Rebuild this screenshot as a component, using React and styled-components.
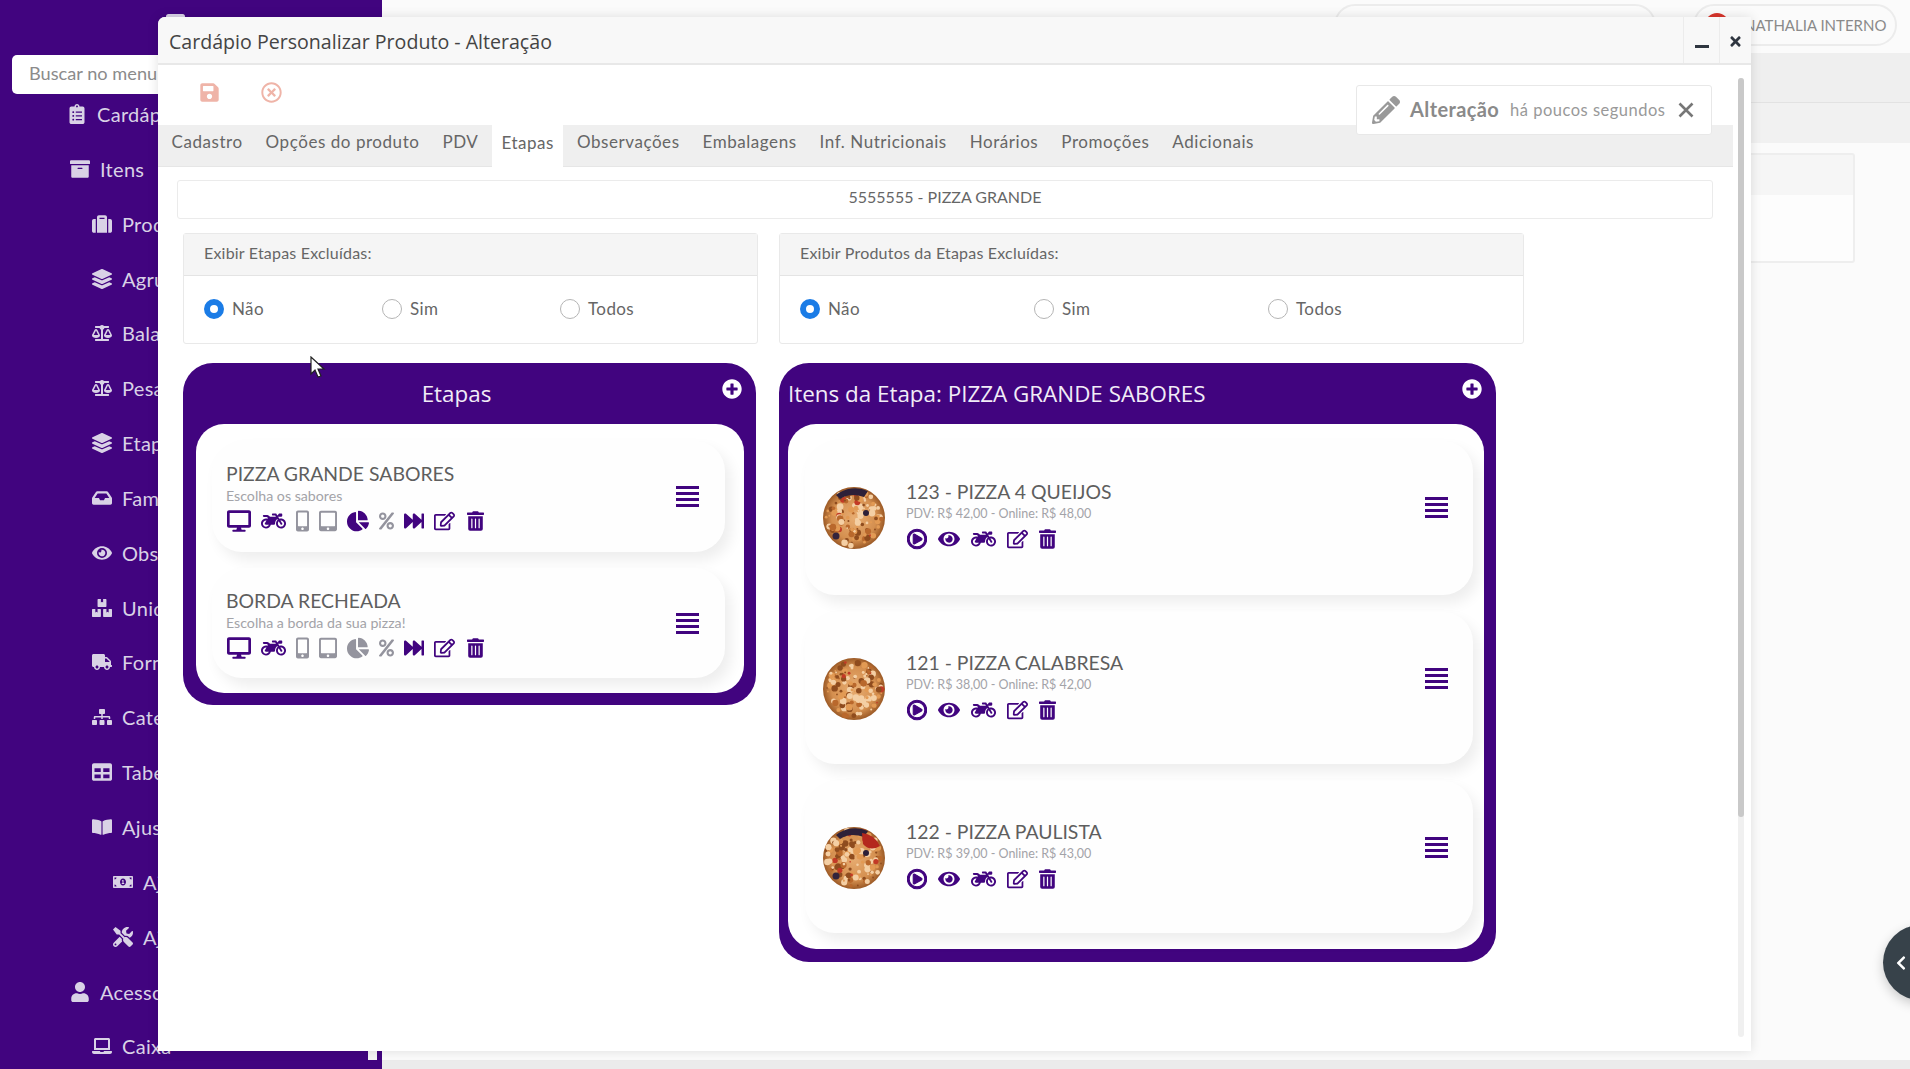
import styled, { createGlobalStyle } from "styled-components";
import {
  FaArchive, FaBalanceScale, FaBookOpen, FaBoxes, FaChartPie, FaChevronLeft, FaClipboardList,
  FaDesktop, FaEye, FaFastForward, FaInbox, FaLaptop, FaLayerGroup, FaMobileAlt, FaMoneyBillAlt, FaMotorcycle,
  FaPencilAlt, FaPercent, FaPlusCircle, FaRegEdit, FaRegPlayCircle, FaRegTimesCircle, FaSave, FaSitemap,
  FaSuitcase, FaTable, FaTabletAlt, FaTimes, FaTools, FaTrashAlt, FaTruck, FaUser,
} from "react-icons/fa";

const PURPLE = "#41047f";
const GOTHIC = `"Lato", "Liberation Sans", sans-serif`;
const HUMAN = `"Open Sans", "Noto Sans", sans-serif`;

const GlobalStyle = createGlobalStyle`
  html, body { margin: 0; padding: 0; background: #fbfbfb; }
  * { box-sizing: border-box; }
`;

const Page = styled.div`
  position: relative;
  display: flex;
  width: 1910px;
  height: 1069px;
  overflow: hidden;
  font-family: ${GOTHIC};
  background: #fbfbfb;
`;

/* sidebar, mostly hidden behind the window */
const Sidebar = styled.aside`
  flex: 0 0 382px;
  padding: 55px 0 0 12px;
  background: ${PURPLE};
`;

const LogoPeek = styled.div`
  position: absolute;
  left: 166px;
  top: 14px;
  width: 19px;
  height: 5px;
  background: #d9d2e6;
  border-radius: 3px;
`;

const SideTick = styled.div`
  position: absolute;
  left: 368px;
  top: 1051px;
  width: 9px;
  height: 9px;
  background: #f4f4f4;
`;

const Search = styled.div`
  width: 200px;
  height: 39px;
  padding: 0 0 3px 17px;
  display: flex;
  align-items: center;
  background: #fff;
  border-radius: 5px;
  font-size: 18.2px;
  color: #8b8b8b;
  white-space: nowrap;
`;

const Menu = styled.nav`
  display: flex;
  flex-direction: column;
  gap: 14.85px;
  margin-top: 0;
`;

const MenuItem = styled.div`
  height: 40px;
  display: flex;
  align-items: center;
  gap: 10px;
  padding-left: ${(p) => p.$indent}px;
  font-size: 20px;
  letter-spacing: 0.3px;
  color: #d9d2e6;
  white-space: nowrap;
  svg { width: 20px; height: 20px; }
`;

const Main = styled.main`
  flex: 1;
  display: flex;
  flex-direction: column;
`;

const TopBar = styled.div`
  height: 53px;
  padding: 4px 13px 0 0;
  display: flex;
  justify-content: flex-end;
  gap: 37px;
`;

const Pill = styled.div`
  width: ${(p) => p.$w}px;
  height: 42px;
  display: flex;
  align-items: center;
  gap: 15px;
  padding: 0 0 0 10px;
  border: 2px solid #ececec;
  border-radius: 22px;
  font-size: 15px;
  color: #8a8a8a;
  white-space: nowrap;
`;

const UserDot = styled.span`
  width: 24px;
  height: 24px;
  border-radius: 50%;
  background: #d8352c;
`;

const GreyBand = styled.div`
  height: 90px;
  background: linear-gradient(#efefef 0 55%, #e2e2e2 55% 56%, #f1f1f1 56%);
`;

const BackBox = styled.div`
  width: 400px;
  height: 110px;
  margin: 10px 0 0 1073px;
  border: 2px solid #eee;
  border-radius: 3px;
  background: linear-gradient(#f6f6f6 0 38%, #fdfdfd 38%);
`;

const BottomStrip = styled.div`
  position: absolute;
  left: 382px;
  right: 0;
  bottom: 0;
  height: 9px;
  background: #ebebeb;
`;

const SideTab = styled.div`
  position: absolute;
  left: 1883px;
  top: 925px;
  width: 75px;
  height: 75px;
  padding-left: 10px;
  display: flex;
  align-items: center;
  border-radius: 50%;
  background: #37424a;
  color: #fff;
  box-shadow: 0 4px 12px rgba(0, 0, 0, 0.2);
  svg { width: 16px; height: 16px; }
`;

/* floating window */
const Window = styled.section`
  position: absolute;
  left: 158px;
  top: 17px;
  width: 1593px;
  height: 1034px;
  background: #fff;
  border-radius: 7px 0 0 0;
  box-shadow: 0 0 12px rgba(0, 0, 0, 0.12);
`;

const TitleBar = styled.header`
  height: 48px;
  display: flex;
  align-items: center;
  padding-left: 11px;
  background: #f8f8f8;
  border-radius: 7px 0 0 0;
  border-bottom: 2px solid #e8e8e8;
`;

const Title = styled.h1`
  flex: 1;
  margin: 2px 0 0;
  font-family: ${HUMAN};
  font-size: 19.6px;
  font-weight: 400;
  color: #444;
`;

const WinButton = styled.button`
  width: ${(p) => p.$w}px;
  height: 46px;
  display: flex;
  align-items: ${(p) => (p.$low ? "flex-end" : "center")};
  justify-content: center;
  padding: ${(p) => (p.$low ? "0 0 15px" : "3px 0 0")};
  border: 0;
  border-left: 1px solid #ececec;
  background: transparent;
  color: #2f3640;
  svg { width: 15px; height: 15px; }
`;

const MinusBar = styled.span`
  width: 14px;
  height: 3px;
  background: #2f3640;
`;

const Toolbar = styled.div`
  height: 60px;
  display: flex;
  align-items: center;
  gap: 41px;
  padding: 0 0 5px 41px;
  color: #efb4a8;
  svg { width: 21px; height: 21px; }
`;

const Tabs = styled.div`
  height: 42px;
  margin-right: 18px;
  padding-left: 2px;
  display: flex;
  background: #efefef;
  border-bottom: 1px solid #e6e6e6;
`;

const Tab = styled.div`
  display: flex;
  align-items: center;
  padding: 0 ${(p) => (p.$active ? "9px" : "11.5px")} 9px;
  margin: 0 ${(p) => (p.$active ? "2.5px" : "0")};
  font-size: 17px;
  letter-spacing: 0.55px;
  color: #666;
  background: ${(p) => (p.$active ? "#fff" : "transparent")};
  height: ${(p) => (p.$active ? "43px" : "auto")};
`;

const ProductBar = styled.div`
  width: 1536px;
  height: 39px;
  margin: 13px 0 0 19px;
  padding-bottom: 6px;
  display: flex;
  align-items: center;
  justify-content: center;
  border: 1px solid #ebebeb;
  border-radius: 3px;
  font-size: 16px;
  color: #666;
`;

const FilterRow = styled.div`
  display: flex;
  gap: 21px;
  margin: 14px 0 0 25px;
`;

const FilterCard = styled.div`
  width: ${(p) => p.$w}px;
  height: 111px;
  border: 1px solid #e9e9e9;
  border-radius: 3px;
`;

const FilterHead = styled.div`
  height: 42px;
  padding: 0 0 5px 20px;
  display: flex;
  align-items: center;
  background: #f5f5f5;
  border-bottom: 1px solid #e4e4e4;
  font-size: 16px;
  letter-spacing: 0.2px;
  color: #666;
`;

const RadioRow = styled.div`
  height: 68px;
  padding: 0 0 3px 20px;
  display: flex;
  align-items: center;
`;

const RadioLabel = styled.label`
  width: ${(p) => p.$w}px;
  display: flex;
  align-items: center;
  gap: 8px;
  font-size: 17px;
  letter-spacing: 0.4px;
  color: #666;
`;

const RadioDot = styled.span`
  width: 20px;
  height: 20px;
  border-radius: 50%;
  background: #fff;
  border: ${(p) => (p.$on ? "6px solid #1b7ce6" : "1.5px solid #b5b5b5")};
`;

const Boards = styled.div`
  display: flex;
  align-items: flex-start;
  gap: 23px;
  margin: 19px 0 0 25px;
`;

const Board = styled.div`
  position: relative;
  width: ${(p) => p.$w}px;
  padding: 0 12px ${(p) => p.$bottom}px ${(p) => p.$left}px;
  background: ${PURPLE};
  border-radius: 30px;
`;

const BoardHead = styled.div`
  height: 61px;
  padding: 0 ${(p) => (p.$center ? "27px" : "0")} 1px 0;
  display: flex;
  align-items: center;
  justify-content: ${(p) => (p.$center ? "center" : "flex-start")};
  font-family: ${HUMAN};
  font-size: 22.4px;
  font-weight: 500;
  color: #f1ecf7;
  white-space: nowrap;
`;

const AddButton = styled.span`
  position: absolute;
  right: 14px;
  top: 16px;
  display: flex;
  color: #fff;
  svg { width: 20px; height: 20px; }
`;

const BoardBody = styled.div`
  display: flex;
  flex-direction: column;
  gap: ${(p) => p.$gap}px;
  padding: 17px ${(p) => p.$right}px ${(p) => p.$bottom}px ${(p) => p.$left}px;
  background: #fff;
  border-radius: 28px;
`;

const StepCard = styled.article`
  height: ${(p) => p.$h}px;
  display: flex;
  align-items: center;
  justify-content: space-between;
  padding: 0 26px 0 14px;
  background: #fefefe;
  border-radius: 30px;
  box-shadow: 6px 8px 14px rgba(0, 0, 0, 0.07);
`;

const ItemCard = styled.article`
  height: ${(p) => p.$h}px;
  display: flex;
  align-items: flex-start;
  padding: 38px 25px 0 17px;
  background: #fefefe;
  border-radius: 30px;
  box-shadow: 6px 8px 14px rgba(0, 0, 0, 0.07);
`;

const Avatar = styled.svg`
  flex: 0 0 64px;
  width: 64px;
  height: 64px;
  margin: 7px 20px 0 0;
`;

const Info = styled.div`
  flex: 1;
`;

const CardTitle = styled.div`
  height: 26px;
  line-height: 26px;
  font-size: 19.4px;
  color: #5e5e5e;
`;

const CardSub = styled.div`
  height: 18px;
  line-height: 18px;
  font-size: ${(p) => p.$size}px;
  color: #a3a3a8;
`;

const IconRow = styled.div`
  display: flex;
  align-items: center;
  gap: ${(p) => p.$gap}px;
  height: 22px;
  margin-top: 5px;
  padding-left: ${(p) => p.$left}px;
`;

const Slot = styled.span`
  display: flex;
  align-items: center;
  justify-content: center;
  flex: 0 0 ${(p) => p.$w}px;
  margin-left: ${(p) => p.$ml || 0}px;
  color: ${(p) => (p.$grey ? "#94949e" : PURPLE)};
  svg { width: 100%; height: 24px; display: block; }
`;

const ThickSlot = styled(Slot)`
  svg { stroke: currentColor; stroke-width: 28; }
`;

const Burger = styled.svg`
  flex: 0 0 23px;
  width: 23px;
  height: 21px;
  margin-top: ${(p) => p.$top}px;
  color: ${PURPLE};
`;

const Toast = styled.div`
  position: absolute;
  left: 1198px;
  top: 68px;
  width: 356px;
  height: 50px;
  display: flex;
  align-items: center;
  padding-left: 15px;
  background: #fff;
  border: 1px solid #e8e8e8;
  border-radius: 3px;
  color: #888;
`;

const ToastIcon = styled.span`
  display: flex;
  margin-right: 10px;
  color: #999;
  svg { width: 28px; height: 28px; }
`;

const ToastTitle = styled.strong`
  width: 100px;
  padding-bottom: 3px;
  font-size: 20px;
  font-weight: 700;
  letter-spacing: 0.4px;
  color: #8a8a8a;
`;

const ToastText = styled.span`
  width: 168px;
  font-size: 16.5px;
  letter-spacing: 0.5px;
  white-space: nowrap;
  color: #999;
`;

const ToastClose = styled.svg`
  width: 16px;
  height: 16px;
  color: #777;
`;

const ScrollTrack = styled.div`
  position: absolute;
  left: 1580px;
  top: 61px;
  width: 6px;
  height: 959px;
  background: #f0f0f0;
  border-radius: 3px;
`;

const ScrollThumb = styled.div`
  height: 739px;
  background: #c9c9c9;
  border-radius: 3px;
`;

const Cursor = styled.svg`
  position: absolute;
  left: 310px;
  top: 356px;
  width: 16px;
  height: 24px;
`;

const menu = [
  ["Cardápio", FaClipboardList, 67],
  ["Itens", FaArchive, 70],
  ["Produtos", FaSuitcase, 92],
  ["Agrupadores", FaLayerGroup, 92],
  ["Balanças", FaBalanceScale, 92],
  ["Pesagem", FaBalanceScale, 92],
  ["Etapas", FaLayerGroup, 92],
  ["Famílias", FaInbox, 92],
  ["Observações", FaEye, 92],
  ["Unidades", FaBoxes, 92],
  ["Fornecedores", FaTruck, 92],
  ["Categorias", FaSitemap, 92],
  ["Tabelas", FaTable, 92],
  ["Ajustes", FaBookOpen, 92],
  ["Ajuste de preço", FaMoneyBillAlt, 113],
  ["Ajuste geral", FaTools, 113],
  ["Acesso", FaUser, 70],
  ["Caixa", FaLaptop, 92],
];

const tabs = ["Cadastro", "Opções do produto", "PDV", "Etapas", "Observações", "Embalagens", "Inf. Nutricionais", "Horários", "Promoções", "Adicionais"];

const steps = [
  { name: "PIZZA GRANDE SABORES", sub: "Escolha os sabores", h: 111, pieGrey: false },
  { name: "BORDA RECHEADA", sub: "Escolha a borda da sua pizza!", h: 110, pieGrey: true },
];

const items = [
  { name: "123 - PIZZA 4 QUEIJOS", sub: "PDV: R$ 42,00 - Online: R$ 48,00", h: 154, seed: 7, dark: true },
  { name: "121 - PIZZA CALABRESA", sub: "PDV: R$ 38,00 - Online: R$ 42,00", h: 152, seed: 23, dark: false },
  { name: "122 - PIZZA PAULISTA", sub: "PDV: R$ 39,00 - Online: R$ 43,00", h: 152, seed: 41, dark: true, red: true },
];

function spots(seed, count) {
  const out = [];
  let n = seed;
  const next = () => {
    n = (n * 16807) % 2147483647;
    return (n % 1000) / 1000;
  };
  for (let i = 0; i < count; i++) {
    const a = next() * Math.PI * 2;
    const r = Math.sqrt(next()) * 28;
    out.push({ x: 32 + Math.cos(a) * r, y: 32 + Math.sin(a) * r, s: 0.8 + next() * 2.6, t: next() });
  }
  return out;
}

function spotColor(t) {
  if (t < 0.35) return "#f4cfa4";
  if (t < 0.6) return "#8f4c1e";
  if (t < 0.85) return "#e29a54";
  if (t < 0.95) return "#b9682c";
  return "#c23a26";
}

function Pizza({ seed, dark, red }) {
  const id = `pizza${seed}`;
  return (
    <Avatar viewBox="0 0 64 64">
      <defs>
        <radialGradient id={id}>
          <stop offset="0%" stopColor="#e8ad72" />
          <stop offset="72%" stopColor="#d48f4f" />
          <stop offset="100%" stopColor="#9c5a26" />
        </radialGradient>
      </defs>
      <circle cx="32" cy="32" r="31" fill={`url(#${id})`} />
      {spots(seed, 130).map((d, i) => (
        <circle key={i} cx={d.x} cy={d.y} r={d.s} fill={spotColor(d.t)} />
      ))}
      {dark && <path d="M14 9 A31 31 0 0 1 46 5 L42 11 Q28 6 18 13 Z" fill="#2d2038" />}
      {dark && <circle cx="44" cy="27" r="3" fill="#2d2038" />}
      {red && <path d="M40 7 Q52 8 58 20 Q48 26 41 18 Z" fill="#b4281e" />}
      {dark && <circle cx="14" cy="50" r="3.5" fill="#33243c" />}
    </Avatar>
  );
}

function BurgerIcon({ top }) {
  return (
    <Burger $top={top} viewBox="0 0 23 21" fill="currentColor">
      <rect y="0" width="23" height="3" />
      <rect y="6" width="23" height="3" />
      <rect y="12" width="23" height="3" />
      <rect y="18" width="23" height="3" />
    </Burger>
  );
}

function StepIcons({ pieGrey }) {
  return (
    <IconRow $gap={10} $left={1}>
      <Slot $w={24}><FaDesktop /></Slot>
      <Slot $w={25}><FaMotorcycle /></Slot>
      <Slot $w={13} $grey><FaMobileAlt /></Slot>
      <Slot $w={18} $grey><FaTabletAlt /></Slot>
      <Slot $w={22} $grey={pieGrey}><FaChartPie /></Slot>
      <Slot $w={15} $grey><FaPercent /></Slot>
      <Slot $w={20}><FaFastForward /></Slot>
      <Slot $w={21}><FaRegEdit /></Slot>
      <Slot $w={17} $ml={2}><FaTrashAlt /></Slot>
    </IconRow>
  );
}

function ItemIcons() {
  return (
    <IconRow $gap={11} $left={1}>
      <ThickSlot $w={20}><FaRegPlayCircle /></ThickSlot>
      <Slot $w={22}><FaEye /></Slot>
      <Slot $w={25}><FaMotorcycle /></Slot>
      <Slot $w={21}><FaRegEdit /></Slot>
      <Slot $w={17}><FaTrashAlt /></Slot>
    </IconRow>
  );
}

function Filter({ w, label, widths }) {
  return (
    <FilterCard $w={w}>
      <FilterHead>{label}</FilterHead>
      <RadioRow>
        <RadioLabel $w={widths}><RadioDot $on />Não</RadioLabel>
        <RadioLabel $w={widths}><RadioDot />Sim</RadioLabel>
        <RadioLabel $w={widths}><RadioDot />Todos</RadioLabel>
      </RadioRow>
    </FilterCard>
  );
}

export default function App() {
  return (
    <Page>
      <GlobalStyle />
      <Sidebar>
        <Search>Buscar no menu</Search>
        <Menu>
          {menu.map(([label, Icon, indent]) => (
            <MenuItem key={label} $indent={indent - 12}><Icon />{label}</MenuItem>
          ))}
        </Menu>
      </Sidebar>
      <LogoPeek />
      <SideTick />

      <Main>
        <TopBar>
          <Pill $w={322} />
          <Pill $w={204}><UserDot />NATHALIA INTERNO</Pill>
        </TopBar>
        <GreyBand />
        <BackBox />
      </Main>
      <BottomStrip />
      <SideTab><FaChevronLeft /></SideTab>

      <Window>
        <TitleBar>
          <Title>Cardápio Personalizar Produto - Alteração</Title>
          <WinButton $w={36} $low><MinusBar /></WinButton>
          <WinButton $w={32}><FaTimes /></WinButton>
        </TitleBar>
        <Toolbar>
          <FaSave />
          <FaRegTimesCircle />
        </Toolbar>
        <Tabs>
          {tabs.map((t) => (
            <Tab key={t} $active={t === "Etapas"}>{t}</Tab>
          ))}
        </Tabs>
        <ProductBar>5555555 - PIZZA GRANDE</ProductBar>
        <FilterRow>
          <Filter w={575} label="Exibir Etapas Excluídas:" widths={178} />
          <Filter w={745} label="Exibir Produtos da Etapas Excluídas:" widths={234} />
        </FilterRow>
        <Boards>
          <Board $w={573} $left={13} $bottom={12}>
            <BoardHead $center>Etapas</BoardHead>
            <AddButton><FaPlusCircle /></AddButton>
            <BoardBody $gap={16} $left={16} $right={19} $bottom={15}>
              {steps.map((s) => (
                <StepCard key={s.name} $h={s.h}>
                  <Info>
                    <CardTitle>{s.name}</CardTitle>
                    <CardSub $size={14.2}>{s.sub}</CardSub>
                    <StepIcons pieGrey={s.pieGrey} />
                  </Info>
                  <BurgerIcon top={0} />
                </StepCard>
              ))}
            </BoardBody>
          </Board>
          <Board $w={717} $left={9} $bottom={13}>
            <BoardHead>Itens da Etapa: PIZZA GRANDE SABORES</BoardHead>
            <AddButton><FaPlusCircle /></AddButton>
            <BoardBody $gap={17} $left={17} $right={11} $bottom={16}>
              {items.map((it) => (
                <ItemCard key={it.name} $h={it.h}>
                  <Pizza seed={it.seed} dark={it.dark} red={it.red} />
                  <Info>
                    <CardTitle>{it.name}</CardTitle>
                    <CardSub $size={12.5}>{it.sub}</CardSub>
                    <ItemIcons />
                  </Info>
                  <BurgerIcon top={18} />
                </ItemCard>
              ))}
            </BoardBody>
          </Board>
        </Boards>
        <Toast>
          <ToastIcon><FaPencilAlt /></ToastIcon>
          <ToastTitle>Alteração</ToastTitle>
          <ToastText>há poucos segundos</ToastText>
          <ToastClose viewBox="0 0 16 16" fill="none" stroke="currentColor" strokeWidth="2.6">
            <path d="M1.5 1.5 L14.5 14.5 M14.5 1.5 L1.5 14.5" />
          </ToastClose>
        </Toast>
        <ScrollTrack><ScrollThumb /></ScrollTrack>
      </Window>

      <Cursor viewBox="0 0 16 24">
        <path d="M1 1 L1 18 L5 14 L8 21 L11 20 L8 13 L14 13 Z" fill="#fff" stroke="#222" strokeWidth="1.2" />
      </Cursor>
    </Page>
  );
}
